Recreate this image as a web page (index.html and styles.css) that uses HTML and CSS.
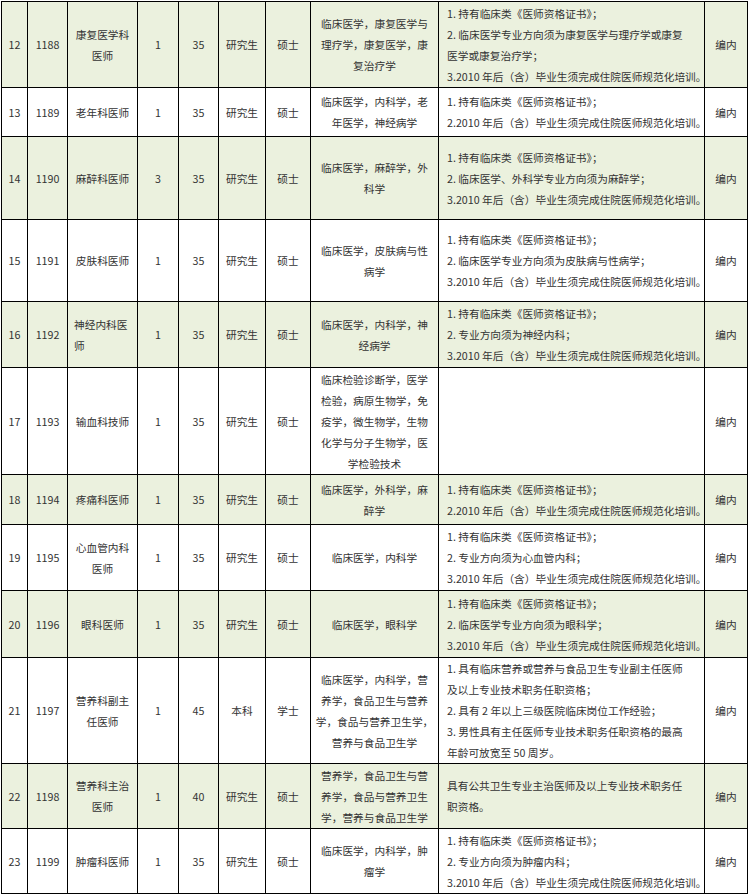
FILE: index.html
```html
<!DOCTYPE html>
<html lang="zh-CN">
<head>
<meta charset="utf-8">
<title>岗位表</title>
<link rel="stylesheet" href="styles.css">
</head>
<body>
<div class="sheet">
  <div class="row alt">
    <div class="cell">12</div><div class="cell">1188</div><div class="cell">康复医学科<br>医师</div><div class="cell">1</div><div class="cell">35</div><div class="cell">研究生</div><div class="cell">硕士</div>
    <div class="cell major">临床医学，康复医学与<br>理疗学，康复医学，康<br>复治疗学</div>
    <div class="cell req">1. 持有临床类《医师资格证书》；<br>2. 临床医学专业方向须为康复医学与理疗学或康复<br>医学或康复治疗学；<br>3.2010 年后（含）毕业生须完成住院医师规范化培训。</div>
    <div class="cell">编内</div>
  </div>
  <div class="row">
    <div class="cell">13</div><div class="cell">1189</div><div class="cell">老年科医师</div><div class="cell">1</div><div class="cell">35</div><div class="cell">研究生</div><div class="cell">硕士</div>
    <div class="cell major">临床医学，内科学，老<br>年医学，神经病学</div>
    <div class="cell req">1. 持有临床类《医师资格证书》；<br>2.2010 年后（含）毕业生须完成住院医师规范化培训。</div>
    <div class="cell">编内</div>
  </div>
  <div class="row alt">
    <div class="cell">14</div><div class="cell">1190</div><div class="cell">麻醉科医师</div><div class="cell">3</div><div class="cell">35</div><div class="cell">研究生</div><div class="cell">硕士</div>
    <div class="cell major">临床医学，麻醉学，外<br>科学</div>
    <div class="cell req">1. 持有临床类《医师资格证书》；<br>2. 临床医学、外科学专业方向须为麻醉学；<br>3.2010 年后（含）毕业生须完成住院医师规范化培训。</div>
    <div class="cell">编内</div>
  </div>
  <div class="row">
    <div class="cell">15</div><div class="cell">1191</div><div class="cell">皮肤科医师</div><div class="cell">1</div><div class="cell">35</div><div class="cell">研究生</div><div class="cell">硕士</div>
    <div class="cell major">临床医学，皮肤病与性<br>病学</div>
    <div class="cell req">1. 持有临床类《医师资格证书》；<br>2. 临床医学专业方向须为皮肤病与性病学；<br>3.2010 年后（含）毕业生须完成住院医师规范化培训。</div>
    <div class="cell">编内</div>
  </div>
  <div class="row alt">
    <div class="cell">16</div><div class="cell">1192</div><div class="cell left">神经内科医<br>师</div><div class="cell">1</div><div class="cell">35</div><div class="cell">研究生</div><div class="cell">硕士</div>
    <div class="cell major">临床医学，内科学，神<br>经病学</div>
    <div class="cell req">1. 持有临床类《医师资格证书》；<br>2. 专业方向须为神经内科；<br>3.2010 年后（含）毕业生须完成住院医师规范化培训。</div>
    <div class="cell">编内</div>
  </div>
  <div class="row">
    <div class="cell">17</div><div class="cell">1193</div><div class="cell">输血科技师</div><div class="cell">1</div><div class="cell">35</div><div class="cell">研究生</div><div class="cell">硕士</div>
    <div class="cell major">临床检验诊断学，医学<br>检验，病原生物学，免<br>疫学，微生物学，生物<br>化学与分子生物学，医<br>学检验技术</div>
    <div class="cell req"></div>
    <div class="cell">编内</div>
  </div>
  <div class="row alt">
    <div class="cell">18</div><div class="cell">1194</div><div class="cell">疼痛科医师</div><div class="cell">1</div><div class="cell">35</div><div class="cell">研究生</div><div class="cell">硕士</div>
    <div class="cell major">临床医学，外科学，麻<br>醉学</div>
    <div class="cell req">1. 持有临床类《医师资格证书》；<br>2.2010 年后（含）毕业生须完成住院医师规范化培训。</div>
    <div class="cell">编内</div>
  </div>
  <div class="row">
    <div class="cell">19</div><div class="cell">1195</div><div class="cell">心血管内科<br>医师</div><div class="cell">1</div><div class="cell">35</div><div class="cell">研究生</div><div class="cell">硕士</div>
    <div class="cell major">临床医学，内科学</div>
    <div class="cell req">1. 持有临床类《医师资格证书》；<br>2. 专业方向须为心血管内科；<br>3.2010 年后（含）毕业生须完成住院医师规范化培训。</div>
    <div class="cell">编内</div>
  </div>
  <div class="row alt">
    <div class="cell">20</div><div class="cell">1196</div><div class="cell">眼科医师</div><div class="cell">1</div><div class="cell">35</div><div class="cell">研究生</div><div class="cell">硕士</div>
    <div class="cell major">临床医学，眼科学</div>
    <div class="cell req">1. 持有临床类《医师资格证书》；<br>2. 临床医学专业方向须为眼科学；<br>3.2010 年后（含）毕业生须完成住院医师规范化培训。</div>
    <div class="cell">编内</div>
  </div>
  <div class="row">
    <div class="cell">21</div><div class="cell">1197</div><div class="cell">营养科副主<br>任医师</div><div class="cell">1</div><div class="cell">45</div><div class="cell">本科</div><div class="cell">学士</div>
    <div class="cell major">临床医学，内科学，营<br>养学，食品卫生与营养<br>学，食品与营养卫生学，<br>营养与食品卫生学</div>
    <div class="cell req">1. 具有临床营养或营养与食品卫生专业副主任医师<br>及以上专业技术职务任职资格；<br>2. 具有 2 年以上三级医院临床岗位工作经验；<br>3. 男性具有主任医师专业技术职务任职资格的最高<br>年龄可放宽至 50 周岁。</div>
    <div class="cell">编内</div>
  </div>
  <div class="row alt">
    <div class="cell">22</div><div class="cell">1198</div><div class="cell">营养科主治<br>医师</div><div class="cell">1</div><div class="cell">40</div><div class="cell">研究生</div><div class="cell">硕士</div>
    <div class="cell major">营养学，食品卫生与营<br>养学，食品与营养卫生<br>学，营养与食品卫生学</div>
    <div class="cell req">具有公共卫生专业主治医师及以上专业技术职务任<br>职资格。</div>
    <div class="cell">编内</div>
  </div>
  <div class="row">
    <div class="cell">23</div><div class="cell">1199</div><div class="cell">肿瘤科医师</div><div class="cell">1</div><div class="cell">35</div><div class="cell">研究生</div><div class="cell">硕士</div>
    <div class="cell major">临床医学，内科学，肿<br>瘤学</div>
    <div class="cell req">1. 持有临床类《医师资格证书》；<br>2. 专业方向须为肿瘤内科；<br>3.2010 年后（含）毕业生须完成住院医师规范化培训。</div>
    <div class="cell">编内</div>
  </div>
</div>
</body>
</html>
```

FILE: styles.css
```css
html, body {
  margin: 0;
  padding: 0;
  background: #fff;
}

body {
  padding: 1px 0 0 1px;
  font-family: "Noto Sans CJK SC", "Noto Sans", sans-serif;
  font-size: 10.7px;
  line-height: 21px;
  color: #333;
}

.sheet {
  display: grid;
  width: max-content;
  grid-template-columns: 25px 39px 69px 40px 39px 46px 44px 127px 265px 42px;
  grid-template-rows: 85px 48px 82px 81px 65px 106px 49px 65px 66px 105px 64px 64px;
  gap: 1px;
  padding: 1px;
  background: #000;
}

.row {
  display: contents;
}

.cell {
  display: flex;
  flex-direction: column;
  justify-content: center;
  text-align: center;
  background: #fff;
  white-space: nowrap;
  overflow: visible;
}

.alt > .cell {
  background: #ebf1de;
}

.left {
  text-align: left;
  padding-left: 6px;
}

.req {
  text-align: left;
  padding-left: 8px;
}
```
